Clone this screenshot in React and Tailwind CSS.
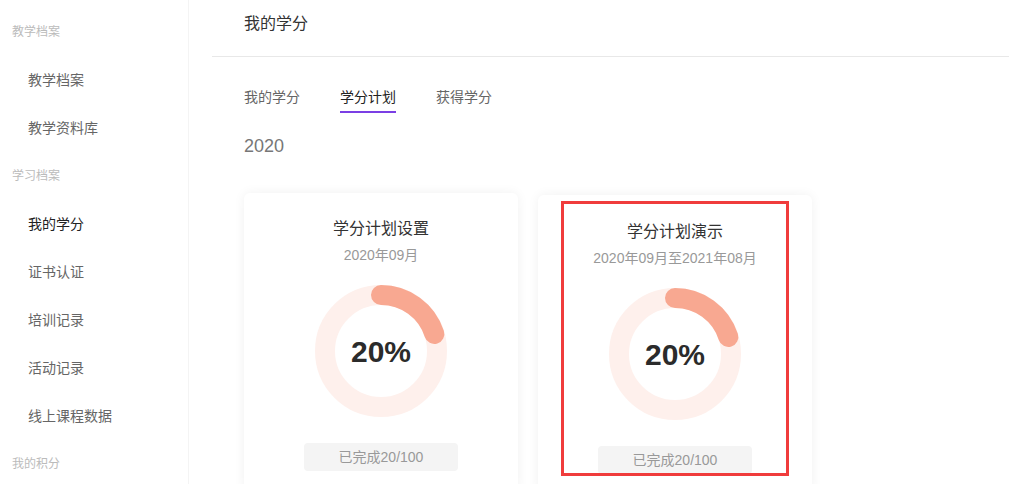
const menu = [
  { type: "group", label: "教学档案" },
  { type: "item", label: "教学档案" },
  { type: "item", label: "教学资料库" },
  { type: "group", label: "学习档案" },
  { type: "item", label: "我的学分", active: true },
  { type: "item", label: "证书认证" },
  { type: "item", label: "培训记录" },
  { type: "item", label: "活动记录" },
  { type: "item", label: "线上课程数据" },
  { type: "group", label: "我的积分" },
];

const tabs = [
  { label: "我的学分" },
  { label: "学分计划", active: true },
  { label: "获得学分" },
];

function Donut({ percent }) {
  const r = 56;
  const c = 2 * Math.PI * r;
  const len = (c * percent) / 100;
  return (
    <div className="relative w-[132px] h-[132px]">
      <svg width="132" height="132" viewBox="0 0 132 132">
        <circle cx="66" cy="66" r={r} fill="none" stroke="#fef0ec" strokeWidth="20" />
        <circle
          cx="66"
          cy="66"
          r={r}
          fill="none"
          stroke="#f8a891"
          strokeWidth="20"
          strokeLinecap="round"
          strokeDasharray={`${len} ${c}`}
          transform="rotate(-90 66 66)"
        />
      </svg>
      <div className="absolute inset-0 flex items-center justify-center text-[30px] font-bold text-[#2b2b2b]">
        {percent}%
      </div>
    </div>
  );
}

function PlanCard({ title, period, percent, done, highlighted }) {
  return (
    <div
      className={`relative w-[274px] h-[300px] shrink-0 bg-white rounded-[6px] shadow-[0_0_12px_rgba(0,0,0,0.06)] flex flex-col items-center ${
        highlighted ? "mt-[2px] pt-[25px]" : "pt-[24px]"
      }`}
    >
      <div className="text-[16px] leading-[24px] text-[#333]">{title}</div>
      <div className="mt-[4px] text-[14px] leading-[20px] text-[#999]">{period}</div>
      <div className="mt-[20px]">
        <Donut percent={percent} />
      </div>
      <div className="mt-[26px] w-[154px] h-[28px] rounded-[4px] bg-[#f4f4f4] flex items-center justify-center text-[14px] text-[#999]">
        {done}
      </div>

      {/* annotation frame */}
      {highlighted && (
        <div className="absolute left-[23px] top-[6px] w-[228px] h-[275px] border-[3px] border-[#f03c3c]" />
      )}
    </div>
  );
}

export default function App() {
  return (
    <div className="flex h-[484px] overflow-hidden bg-white [font-family:'Liberation_Sans','Noto_Sans_CJK_SC',sans-serif]">
      {/* Sidebar */}
      <aside className="w-[189px] shrink-0 border-r border-[#f4f4f4] pt-[8px]">
        {menu.map((m, i) =>
          m.type === "group" ? (
            <div key={i} className="h-[48px] flex items-center pl-[12px] text-[12px] text-[#bbb]">
              {m.label}
            </div>
          ) : (
            <div
              key={i}
              className={`h-[48px] flex items-center pl-[28px] text-[14px] ${
                m.active ? "text-[#222]" : "text-[#666]"
              }`}
            >
              {m.label}
            </div>
          )
        )}
      </aside>

      {/* Main */}
      <main className="flex-1 pl-[23px]">
        <div className="h-[57px] pt-[12px] pl-[32px] border-b border-[#e8e8e8] text-[16px] leading-[24px] text-[#333]">
          我的学分
        </div>

        <div className="pl-[32px]">
          {/* Tabs */}
          <div className="mt-[30px] flex gap-[40px]">
            {tabs.map((t) => (
              <div
                key={t.label}
                className={`pb-[4px] border-b-2 text-[14px] leading-[20px] ${
                  t.active ? "border-[#7b3fe4] text-[#222]" : "border-transparent text-[#666]"
                }`}
              >
                {t.label}
              </div>
            ))}
          </div>

          <div className="mt-[20px] text-[18px] leading-[26px] text-[#777]">2020</div>

          {/* Cards */}
          <div className="mt-[34px] flex items-start gap-[20px]">
            <PlanCard title="学分计划设置" period="2020年09月" percent={20} done="已完成20/100" />
            <PlanCard
              title="学分计划演示"
              period="2020年09月至2021年08月"
              percent={20}
              done="已完成20/100"
              highlighted
            />
          </div>
        </div>
      </main>
    </div>
  );
}
